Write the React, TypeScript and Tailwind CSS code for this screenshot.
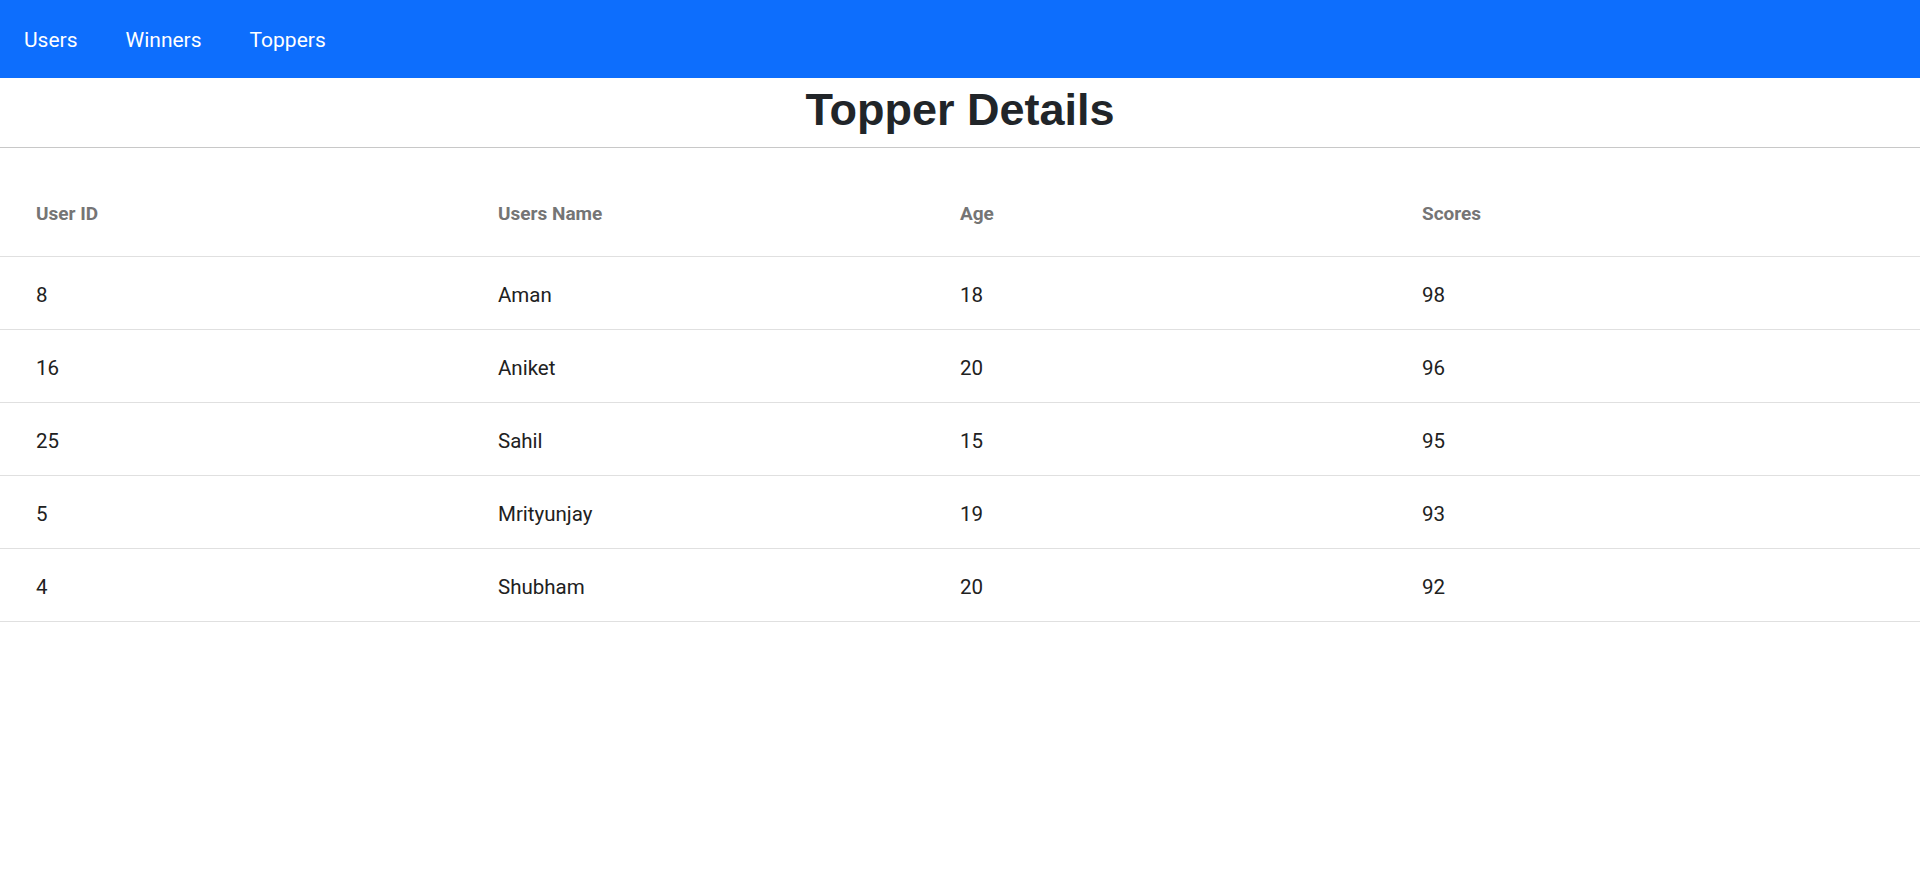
const toppers = [
    { id: 8, name: 'Aman', age: 18, score: 98 },
    { id: 16, name: 'Aniket', age: 20, score: 96 },
    { id: 25, name: 'Sahil', age: 15, score: 95 },
    { id: 5, name: 'Mrityunjay', age: 19, score: 93 },
    { id: 4, name: 'Shubham', age: 20, score: 92 },
]

const cols = 'grid grid-cols-[462px_462px_462px_1fr]'

export default function App() {
    return (
        <div className="min-h-screen bg-white font-['Roboto',sans-serif]">
            <nav className="flex h-[78px] items-center gap-[48px] bg-[#0d6efd] pt-[3px] pl-6 text-[21px] text-white">
                <a href="#">Users</a>
                <a href="#">Winners</a>
                <a href="#">Toppers</a>
            </nav>
            <h1 className="mt-[6px] mb-[12px] text-center font-['Liberation_Sans',Arial,sans-serif] text-[45px] leading-[51px] font-bold text-[#212529]">
                Topper Details
            </h1>
            <hr className="h-0 border-0 border-t border-[#c8c8c8]" />
            <div>
                <div className={`${cols} border-b border-[#e0e0e0] pt-[54px] pb-[30px] text-[19px] leading-6 font-bold text-[#757575]`}>
                    <div className="pl-9">User ID</div>
                    <div className="pl-9">Users Name</div>
                    <div className="pl-9">Age</div>
                    <div className="pl-9">Scores</div>
                </div>
                {toppers.map((t) => (
                    <div
                        key={t.id}
                        className={`${cols} h-[73px] items-center border-b border-[#e0e0e0] pt-[4px] text-[20.5px] text-[#212121]`}
                    >
                        <div className="pl-9">{t.id}</div>
                        <div className="pl-9">{t.name}</div>
                        <div className="pl-9">{t.age}</div>
                        <div className="pl-9">{t.score}</div>
                    </div>
                ))}
            </div>
        </div>
    )
}
